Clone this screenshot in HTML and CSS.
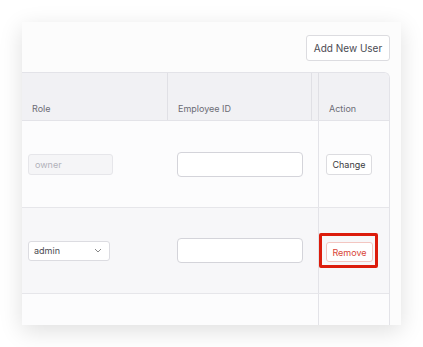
FILE: index.html
```html
<!DOCTYPE html>
<html>
<head>
    <title>Users</title>
    <link rel="stylesheet" href="styles.css">
</head>
<body>
    <div class="card">
        <div class="toolbar">
            <button class="btn">Add New User</button>
        </div>
        <div class="table">
            <div class="row head">
                <div class="cell">Role</div>
                <div class="cell line">Employee ID</div>
                <div class="cell line"></div>
                <div class="cell line">Action</div>
            </div>
            <div class="row">
                <div class="cell role"><input class="field locked" type="text" value="owner" disabled></div>
                <div class="cell"><input class="field emp" type="text"></div>
                <div class="cell"></div>
                <div class="cell line action"><button class="btn small">Change</button></div>
            </div>
            <div class="row alt">
                <div class="cell role">
                    <div class="select">
                        <span>admin</span>
                        <svg width="8" height="5" viewBox="0 0 8 5"><path d="M1 1l3 3 3-3" fill="none" stroke="#888" stroke-width="1"/></svg>
                    </div>
                </div>
                <div class="cell"><input class="field emp" type="text"></div>
                <div class="cell"></div>
                <div class="cell line action flagged">
                    <span class="mark"><button class="btn small danger">Remove</button></span>
                </div>
            </div>
            <div class="row">
                <div class="cell role"></div>
                <div class="cell"><input class="field emp" type="text"></div>
                <div class="cell"></div>
                <div class="cell line action"></div>
            </div>
        </div>
    </div>
</body>
</html>
```

FILE: styles.css
```css
body {
    margin: 0;
    padding: 22px;
    background-color: #ffffff;
    font-family: 'Inter', 'Noto Sans', sans-serif;
    color: #444;
}
.card {
    width: 379px;
    height: 303px;
    box-sizing: border-box;
    padding: 13px 11px 0 0;
    overflow: hidden;
    background-color: #fcfcfc;
    box-shadow: 0 6px 22px rgba(0, 0, 0, 0.13);
}
.toolbar {
    display: flex;
    justify-content: flex-end;
    margin-bottom: 11px;
}
.btn {
    height: 26px;
    width: 84px;
    padding: 0;
    font-family: inherit;
    font-size: 10px;
    color: #4a4a52;
    background-color: #fff;
    border: 1px solid #dcdce0;
    border-radius: 3px;
}
.btn.small {
    height: 21px;
    width: 46px;
    font-size: 9px;
    color: #3a3a40;
}
.btn.danger {
    width: 47px;
    height: 20px;
    color: #d94436;
    border-color: #f3c6c1;
}
.mark {
    display: flex;
    padding: 6px 2px 3px 4px;
    border: 3px solid #dc1c0c;
    border-radius: 2px;
}
.table {
    border-top: 1px solid #e3e3e8;
    border-right: 1px solid #e3e3e8;
    border-top-right-radius: 6px;
    overflow: hidden;
}
.row {
    display: grid;
    grid-template-columns: 145px 144px 7px 71px;
    height: 86px;
    border-bottom: 1px solid #e6e6ea;
    background-color: #fcfcfd;
}
.row.alt {
    height: 85px;
    background-color: #f7f7f9;
}
.row.head {
    height: 47px;
    background-color: #f1f1f4;
    border-bottom-color: #e3e3e8;
}
.cell {
    display: flex;
    align-items: center;
    padding-left: 10px;
    box-sizing: border-box;
}
.head .cell {
    align-items: flex-end;
    padding-bottom: 6px;
    font-size: 9px;
    color: #6c6c75;
}
.head .cell.line {
    border-left: 1px solid #e0e0e5;
}
.cell.line {
    border-left: 1px solid #e3e3e8;
}
.head .cell:nth-child(3) {
    padding-left: 0;
}
.cell.role {
    padding-left: 6px;
}
.cell.action {
    padding-left: 7px;
}
.cell.action.flagged {
    padding-left: 0;
}
.field {
    box-sizing: border-box;
    font-family: inherit;
    font-size: 9px;
    border-radius: 3px;
    outline: none;
}
.field.locked {
    width: 85px;
    height: 21px;
    padding: 0 6px;
    color: #b2b2ba;
    background-color: #f5f5f7;
    border: 1px solid #e6e6ea;
}
.field.emp {
    width: 126px;
    height: 25px;
    background-color: #fff;
    border: 1px solid #d4d4da;
    border-radius: 4px;
}
.select {
    box-sizing: border-box;
    width: 82px;
    height: 20px;
    display: flex;
    align-items: center;
    justify-content: space-between;
    padding: 0 7px 0 5px;
    font-size: 9px;
    color: #4a4a50;
    background-color: #fff;
    border: 1px solid #dcdce1;
    border-radius: 3px;
}
```
